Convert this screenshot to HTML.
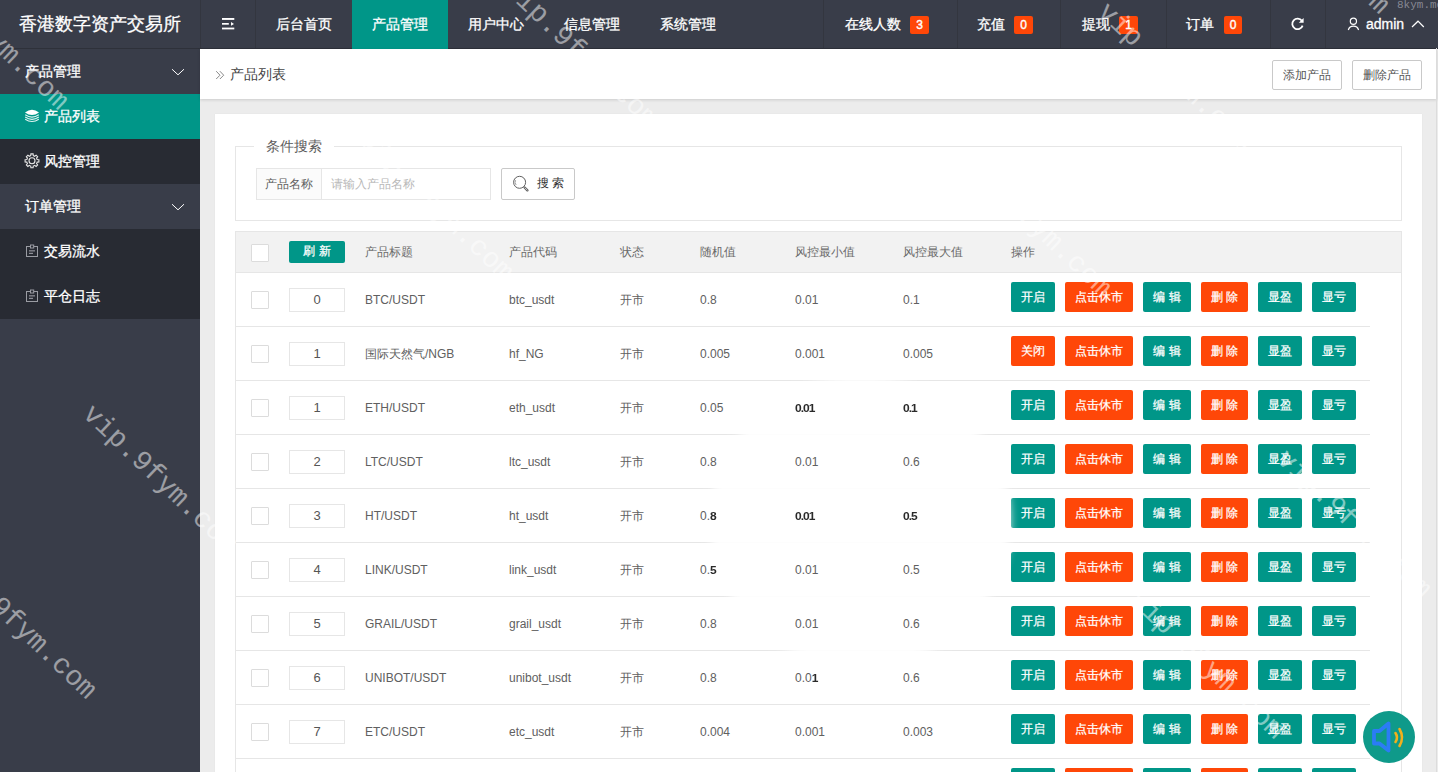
<!DOCTYPE html>
<html><head><meta charset="utf-8">
<style>
*{margin:0;padding:0;box-sizing:border-box}
html,body{width:1438px;height:772px;overflow:hidden;background:#ececec;font-family:"Liberation Sans",sans-serif;color:#666}
.abs{position:absolute}
#hdr{position:absolute;left:0;top:0;width:1438px;height:49px;background:#393d49;border-bottom:1px solid #2e313a}
#logo{position:absolute;left:19px;top:0;height:48px;line-height:48px;font-size:18px;color:#fff;white-space:nowrap}
.nav{position:absolute;top:0;height:48px;line-height:48px;font-size:14px;color:#fff;white-space:nowrap}
.sep{position:absolute;top:0;width:1px;height:48px;background:#33363f}
.badge{position:absolute;top:16px;height:18px;line-height:18px;font-size:12px;color:#fff;background:#ff4708;border-radius:2px;text-align:center;-webkit-text-stroke:0.4px #fff}
#side{position:absolute;left:0;top:49px;width:200px;height:723px;background:#393d49}
.srow{position:absolute;left:0;width:200px;height:45px;line-height:45px;font-size:14px;color:#fff;white-space:nowrap}
.srow span{position:absolute;top:0}
#crumb{position:absolute;left:200px;top:49px;width:1237px;height:50px;background:#fff;box-shadow:0 1px 3px rgba(0,0,0,.14)}
.obtn{position:absolute;top:11px;width:70px;height:30px;line-height:28px;border:1px solid #c9c9c9;border-radius:2px;font-size:12px;color:#555;text-align:center;background:#fff}
#card{position:absolute;left:215px;top:114px;width:1207px;height:700px;background:#fff;box-shadow:0 0 1px rgba(0,0,0,.08)}
#rstrip{position:absolute;left:1436px;top:48px;width:1px;height:724px;background:#dcdcdc}

#fs{position:absolute;left:235px;top:146px;width:1167px;height:75px;border:1px solid #e6e6e6}
#legend{position:absolute;left:254px;top:136px;width:80px;height:20px;background:#fff;font-size:14px;line-height:20px;color:#5c5c5c;text-align:center}
.lbl{position:absolute;left:256px;top:168px;width:66px;height:32px;border:1px solid #e6e6e6;background:#fbfbfb;font-size:12px;line-height:30px;color:#606060;text-align:center}
.inp{position:absolute;left:321px;top:168px;width:170px;height:32px;border:1px solid #e6e6e6;border-left:1px solid #e6e6e6;background:#fff;font-size:12px;line-height:30px;color:#b8b8b8;padding-left:9px}
.sbtn{position:absolute;left:501px;top:168px;width:74px;height:32px;border:1px solid #c9c9c9;border-radius:2px;background:#fff;font-size:12px;line-height:30px;color:#333}
#tbl{position:absolute;left:235px;top:231px;width:1167px;height:600px;border:1px solid #e6e6e6;background:#fff}
#thead{position:absolute;left:236px;top:232px;width:1165px;height:41px;background:#f2f2f2;border-bottom:1px solid #e6e6e6}
.th{position:absolute;top:232px;height:40px;line-height:40px;font-size:12px;color:#6a6a6a;white-space:nowrap}
.tr{position:absolute;left:0;width:1370px;height:54px}
.tr:after{content:"";position:absolute;left:236px;right:0;bottom:0;height:1px;background:#e6e6e6}
.cb{position:absolute;width:18px;height:18px;border:1px solid #dcdcdc;background:#fff;border-radius:1px}
.sort{position:absolute;width:56px;height:24px;border:1px solid #e6e6e6;font-size:13px;line-height:22px;text-align:center;color:#555;background:#fff}
.td{position:absolute;top:1px;height:53px;line-height:53px;font-size:12px;color:#606060;white-space:nowrap}
.btn{position:absolute;top:9px;height:30px;line-height:30px;font-size:12px;color:#fff;text-align:center;border-radius:2px;white-space:nowrap}
.btn.g{background:#009688}.btn.o{background:#ff4708}
.nav,.srow,#logo{-webkit-text-stroke:0.3px #fff}

.btn{-webkit-text-stroke:0.25px #fff}
.wm{position:absolute;z-index:20;font-family:"Liberation Mono",monospace;font-size:28px;line-height:28px;color:rgba(255,255,255,.5);white-space:nowrap;transform-origin:0 0;pointer-events:none}
#blur{position:absolute;z-index:1;left:710px;top:376px;width:300px;height:292px;border-radius:50%;background:#fff;filter:blur(5px);opacity:.95}
.td{z-index:2}
#spk{position:absolute;z-index:30;left:1363px;top:711px;width:52px;height:52px;border-radius:50%;background:#0f9a8a}
.gb{color:#2a2a2a;font-weight:bold;filter:blur(.6px);letter-spacing:-1px;display:inline-block;transform:scaleY(.9)}
</style></head><body>

<div id="hdr">
  
  <svg class="abs" style="left:0;top:0;z-index:3" width="1438" height="48">
    <g fill="#fff">
      <rect x="222" y="18" width="12.3" height="1.9"/>
      <rect x="222" y="23" width="6.8" height="1.7"/>
      <path d="M231 22 L234 23.9 L231 25.8 Z"/>
      <rect x="222" y="27.6" width="12.3" height="1.8"/>
    </g>
    <g fill="none" stroke="#fff">
      <path d="M1301.9 20.8 A5.3 5.3 0 1 0 1302.6 25.6" stroke-width="1.8"/>
      <circle cx="1353.4" cy="21.2" r="3.1" stroke-width="1.2"/>
      <path d="M1348.3 30 A5.4 5.4 0 0 1 1358.6 30" stroke-width="1.2"/>
      <path d="M1412 27 L1418 21.2 L1423.8 27" stroke-width="1.2"/>
    </g>
    <path d="M1303.6 18 L1303.6 22.8 L1298.8 22.8 Z" fill="#fff"/>
  </svg>
  <div id="logo">香港数字资产交易所</div>
  <div class="sep" style="left:200px"></div>
  <div class="sep" style="left:255px"></div>
  <div class="nav" style="left:352px;width:96px;height:49px;background:#009688"></div>
  <div class="nav" style="left:276px">后台首页</div>
  <div class="nav" style="left:372px">产品管理</div>
  <div class="nav" style="left:468px">用户中心</div>
  <div class="nav" style="left:564px">信息管理</div>
  <div class="nav" style="left:660px">系统管理</div>

  <div class="sep" style="left:823px"></div>
  <div class="sep" style="left:957px"></div>
  <div class="sep" style="left:1060px"></div>
  <div class="sep" style="left:1166px"></div>
  <div class="sep" style="left:1270px"></div>
  <div class="sep" style="left:1325px"></div>
  <div class="nav" style="left:845px">在线人数</div>
  <div class="badge" style="left:910px;width:19px">3</div>
  <div class="nav" style="left:977px">充值</div>
  <div class="badge" style="left:1014px;width:19px">0</div>
  <div class="nav" style="left:1082px">提现</div>
  <div class="badge" style="left:1119px;width:19px">1</div>
  <div class="nav" style="left:1186px">订单</div>
  <div class="badge" style="left:1224px;width:18px">0</div>
  <div class="nav" style="left:1366px">admin</div>
</div>

<div id="side">
  <svg class="abs" style="left:0;top:-1px;z-index:3" width="200" height="300">
    <g fill="none" stroke="#fff" stroke-width="1">
      <path d="M172 21.2 L178 26.8 L184 21.2"/>
      <path d="M172 156.2 L178 161.8 L184 156.2"/>
    </g>
    <g fill="#fff">
      <path d="M25 64.5 Q32 59 39 64.5 Q32 69.5 25 64.5 Z"/>
    </g>
    <g fill="none" stroke="#e0f5f2" stroke-width="1.1">
      <path d="M25.2 66.8 Q32 71.5 38.8 66.8"/>
      <path d="M25.2 69 Q32 73.7 38.8 69"/>
      <path d="M25.2 71.2 Q32 75.9 38.8 71.2"/>
    </g>
    <g fill="none" stroke="#e8e8e8" stroke-width="1.1" transform="translate(32 112.8)">
      <path d="M-1.99 -4.91 L-1.28 -5.14 L-1.10 -6.91 L1.10 -6.91 L1.28 -5.14 L1.99 -4.91 L2.07 -4.88 L2.73 -4.54 L4.11 -5.66 L5.66 -4.11 L4.54 -2.73 L4.88 -2.07 L4.91 -1.99 L5.14 -1.28 L6.91 -1.10 L6.91 1.10 L5.14 1.28 L4.91 1.99 L4.88 2.07 L4.54 2.73 L5.66 4.11 L4.11 5.66 L2.73 4.54 L2.07 4.88 L1.99 4.91 L1.28 5.14 L1.10 6.91 L-1.10 6.91 L-1.28 5.14 L-1.99 4.91 L-2.07 4.88 L-2.73 4.54 L-4.11 5.66 L-5.66 4.11 L-4.54 2.73 L-4.88 2.07 L-4.91 1.99 L-5.14 1.28 L-6.91 1.10 L-6.91 -1.10 L-5.14 -1.28 L-4.91 -1.99 L-4.88 -2.07 L-4.54 -2.73 L-5.66 -4.11 L-4.11 -5.66 L-2.73 -4.54 L-2.07 -4.88 Z"/>
      <circle cx="0" cy="0" r="3"/>
    </g>
    <g fill="none" stroke="#9a9ca3" stroke-width="1">
      <rect x="26.5" y="198.5" width="11" height="10"/>
      <rect x="30.5" y="197" width="3.2" height="3" fill="#282b33"/>
      <rect x="26.5" y="243.5" width="11" height="10"/>
      <rect x="30.5" y="242" width="3.2" height="3" fill="#282b33"/>
    </g>
    <g fill="#9a9ca3">
      <rect x="29" y="202.3" width="6" height="1.1"/>
      <rect x="29" y="204.8" width="4" height="1.1"/>
      <rect x="29" y="247.3" width="6" height="1.1"/>
      <rect x="29" y="249.8" width="4" height="1.1"/>
    </g>
  </svg>

  <div class="srow" style="top:0"><span style="left:25px">产品管理</span></div>
  <div class="srow" style="top:45px;background:#009688"><span style="left:44px">产品列表</span></div>
  <div class="srow" style="top:90px;background:#282b33"><span style="left:44px">风控管理</span></div>
  <div class="srow" style="top:135px"><span style="left:25px">订单管理</span></div>
  <div class="srow" style="top:180px;background:#282b33"><span style="left:44px">交易流水</span></div>
  <div class="srow" style="top:225px;background:#282b33"><span style="left:44px">平仓日志</span></div>
</div>

<div id="crumb">
  <svg class="abs" style="left:0;top:-1px;z-index:3" width="40" height="50">
    <g fill="none" stroke="#888" stroke-width="1">
      <path d="M16.2 23.2 L20 27.2 L16.2 31"/>
      <path d="M19.9 23.2 L23.7 27.2 L19.9 31"/>
    </g>
  </svg>

  <div class="abs" style="left:30px;top:0;line-height:50px;font-size:14px;color:#444">产品列表</div>
  <div class="obtn" style="left:1072px">添加产品</div>
  <div class="obtn" style="left:1152px">删除产品</div>
</div>
<div id="rstrip"></div>

<div id="card"></div>
<div id="fs"></div>
<div id="legend">条件搜索</div>
<div class="lbl">产品名称</div>
<div class="inp">请输入产品名称</div>
<div class="sbtn"><svg class="abs" style="left:-1px;top:-1px;z-index:3" width="74" height="32"><circle cx="18.6" cy="14.3" r="6" fill="none" stroke="#606060" stroke-width="1"/><path d="M14.6 12.2 A4 4 0 0 0 15.2 17" fill="none" stroke="#888" stroke-width="0.8"/><path d="M23.6 19.5 L26.4 22.3" stroke="#606060" stroke-width="2.4" stroke-linecap="round"/><path d="M23.9 19.8 L26.1 22" stroke="#fff" stroke-width="0.7" stroke-linecap="round"/></svg><span style="position:absolute;left:35px;top:-1px">搜 索</span></div>
<div id="tbl"></div>
<div id="thead"></div>
<div class="cb" style="left:251px;top:244px"></div>
<div class="btn g" style="left:289px;top:241px;width:56px;height:22px;line-height:21px;font-size:12px;letter-spacing:.5px">刷 新</div>
<div class="th" style="left:365px">产品标题</div>
<div class="th" style="left:509px">产品代码</div>
<div class="th" style="left:620px">状态</div>
<div class="th" style="left:700px">随机值</div>
<div class="th" style="left:795px">风控最小值</div>
<div class="th" style="left:903px">风控最大值</div>
<div class="th" style="left:1011px">操作</div>
<div class="tr" style="top:273px">
<div class="cb" style="left:251px;top:18px"></div>
<div class="sort" style="left:289px;top:15px">0</div>
<div class="td" style="left:365px">BTC/USDT</div>
<div class="td" style="left:509px">btc_usdt</div>
<div class="td" style="left:620px">开市</div>
<div class="td" style="left:700px">0.8</div>
<div class="td" style="left:795px">0.01</div>
<div class="td" style="left:903px">0.1</div>
<div class="btn g" style="left:1011px;width:44px">开启</div>
<div class="btn o" style="left:1065px;width:68px">点击休市</div>
<div class="btn g" style="left:1143px;width:48px">编 辑</div>
<div class="btn o" style="left:1201px;width:47px">删 除</div>
<div class="btn g" style="left:1258px;width:44px">显盈</div>
<div class="btn g" style="left:1312px;width:44px">显亏</div>
</div>
<div class="tr" style="top:327px">
<div class="cb" style="left:251px;top:18px"></div>
<div class="sort" style="left:289px;top:15px">1</div>
<div class="td" style="left:365px">国际天然气/NGB</div>
<div class="td" style="left:509px">hf_NG</div>
<div class="td" style="left:620px">开市</div>
<div class="td" style="left:700px">0.005</div>
<div class="td" style="left:795px">0.001</div>
<div class="td" style="left:903px">0.005</div>
<div class="btn o" style="left:1011px;width:44px">关闭</div>
<div class="btn o" style="left:1065px;width:68px">点击休市</div>
<div class="btn g" style="left:1143px;width:48px">编 辑</div>
<div class="btn o" style="left:1201px;width:47px">删 除</div>
<div class="btn g" style="left:1258px;width:44px">显盈</div>
<div class="btn g" style="left:1312px;width:44px">显亏</div>
</div>
<div class="tr" style="top:381px">
<div class="cb" style="left:251px;top:18px"></div>
<div class="sort" style="left:289px;top:15px">1</div>
<div class="td" style="left:365px">ETH/USDT</div>
<div class="td" style="left:509px">eth_usdt</div>
<div class="td" style="left:620px">开市</div>
<div class="td" style="left:700px">0.05</div>
<div class="td" style="left:795px"><span class="gb">0.01</span></div>
<div class="td" style="left:903px"><span class="gb">0.1</span></div>
<div class="btn g" style="left:1011px;width:44px">开启</div>
<div class="btn o" style="left:1065px;width:68px">点击休市</div>
<div class="btn g" style="left:1143px;width:48px">编 辑</div>
<div class="btn o" style="left:1201px;width:47px">删 除</div>
<div class="btn g" style="left:1258px;width:44px">显盈</div>
<div class="btn g" style="left:1312px;width:44px">显亏</div>
</div>
<div class="tr" style="top:435px">
<div class="cb" style="left:251px;top:18px"></div>
<div class="sort" style="left:289px;top:15px">2</div>
<div class="td" style="left:365px">LTC/USDT</div>
<div class="td" style="left:509px">ltc_usdt</div>
<div class="td" style="left:620px">开市</div>
<div class="td" style="left:700px">0.8</div>
<div class="td" style="left:795px">0.01</div>
<div class="td" style="left:903px">0.6</div>
<div class="btn g" style="left:1011px;width:44px">开启</div>
<div class="btn o" style="left:1065px;width:68px">点击休市</div>
<div class="btn g" style="left:1143px;width:48px">编 辑</div>
<div class="btn o" style="left:1201px;width:47px">删 除</div>
<div class="btn g" style="left:1258px;width:44px">显盈</div>
<div class="btn g" style="left:1312px;width:44px">显亏</div>
</div>
<div class="tr" style="top:489px">
<div class="cb" style="left:251px;top:18px"></div>
<div class="sort" style="left:289px;top:15px">3</div>
<div class="td" style="left:365px">HT/USDT</div>
<div class="td" style="left:509px">ht_usdt</div>
<div class="td" style="left:620px">开市</div>
<div class="td" style="left:700px">0.<span class="gb">8</span></div>
<div class="td" style="left:795px"><span class="gb">0.01</span></div>
<div class="td" style="left:903px"><span class="gb">0.5</span></div>
<div class="btn g" style="left:1011px;width:44px">开启</div>
<div class="btn o" style="left:1065px;width:68px">点击休市</div>
<div class="btn g" style="left:1143px;width:48px">编 辑</div>
<div class="btn o" style="left:1201px;width:47px">删 除</div>
<div class="btn g" style="left:1258px;width:44px">显盈</div>
<div class="btn g" style="left:1312px;width:44px">显亏</div>
</div>
<div class="tr" style="top:543px">
<div class="cb" style="left:251px;top:18px"></div>
<div class="sort" style="left:289px;top:15px">4</div>
<div class="td" style="left:365px">LINK/USDT</div>
<div class="td" style="left:509px">link_usdt</div>
<div class="td" style="left:620px">开市</div>
<div class="td" style="left:700px">0.<span class="gb">5</span></div>
<div class="td" style="left:795px">0.01</div>
<div class="td" style="left:903px">0.5</div>
<div class="btn g" style="left:1011px;width:44px">开启</div>
<div class="btn o" style="left:1065px;width:68px">点击休市</div>
<div class="btn g" style="left:1143px;width:48px">编 辑</div>
<div class="btn o" style="left:1201px;width:47px">删 除</div>
<div class="btn g" style="left:1258px;width:44px">显盈</div>
<div class="btn g" style="left:1312px;width:44px">显亏</div>
</div>
<div class="tr" style="top:597px">
<div class="cb" style="left:251px;top:18px"></div>
<div class="sort" style="left:289px;top:15px">5</div>
<div class="td" style="left:365px">GRAIL/USDT</div>
<div class="td" style="left:509px">grail_usdt</div>
<div class="td" style="left:620px">开市</div>
<div class="td" style="left:700px">0.8</div>
<div class="td" style="left:795px">0.01</div>
<div class="td" style="left:903px">0.6</div>
<div class="btn g" style="left:1011px;width:44px">开启</div>
<div class="btn o" style="left:1065px;width:68px">点击休市</div>
<div class="btn g" style="left:1143px;width:48px">编 辑</div>
<div class="btn o" style="left:1201px;width:47px">删 除</div>
<div class="btn g" style="left:1258px;width:44px">显盈</div>
<div class="btn g" style="left:1312px;width:44px">显亏</div>
</div>
<div class="tr" style="top:651px">
<div class="cb" style="left:251px;top:18px"></div>
<div class="sort" style="left:289px;top:15px">6</div>
<div class="td" style="left:365px">UNIBOT/USDT</div>
<div class="td" style="left:509px">unibot_usdt</div>
<div class="td" style="left:620px">开市</div>
<div class="td" style="left:700px">0.8</div>
<div class="td" style="left:795px">0.0<span class="gb">1</span></div>
<div class="td" style="left:903px">0.6</div>
<div class="btn g" style="left:1011px;width:44px">开启</div>
<div class="btn o" style="left:1065px;width:68px">点击休市</div>
<div class="btn g" style="left:1143px;width:48px">编 辑</div>
<div class="btn o" style="left:1201px;width:47px">删 除</div>
<div class="btn g" style="left:1258px;width:44px">显盈</div>
<div class="btn g" style="left:1312px;width:44px">显亏</div>
</div>
<div class="tr" style="top:705px">
<div class="cb" style="left:251px;top:18px"></div>
<div class="sort" style="left:289px;top:15px">7</div>
<div class="td" style="left:365px">ETC/USDT</div>
<div class="td" style="left:509px">etc_usdt</div>
<div class="td" style="left:620px">开市</div>
<div class="td" style="left:700px">0.004</div>
<div class="td" style="left:795px">0.001</div>
<div class="td" style="left:903px">0.003</div>
<div class="btn g" style="left:1011px;width:44px">开启</div>
<div class="btn o" style="left:1065px;width:68px">点击休市</div>
<div class="btn g" style="left:1143px;width:48px">编 辑</div>
<div class="btn o" style="left:1201px;width:47px">删 除</div>
<div class="btn g" style="left:1258px;width:44px">显盈</div>
<div class="btn g" style="left:1312px;width:44px">显亏</div>
</div>
<div class="tr" style="top:759px">
<div class="cb" style="left:251px;top:18px"></div>
<div class="sort" style="left:289px;top:15px">8</div>
<div class="td" style="left:365px">XRP/USDT</div>
<div class="td" style="left:509px">xrp_usdt</div>
<div class="td" style="left:620px">开市</div>
<div class="td" style="left:700px">0.8</div>
<div class="td" style="left:795px">0.01</div>
<div class="td" style="left:903px">0.6</div>
<div class="btn g" style="left:1011px;width:44px">开启</div>
<div class="btn o" style="left:1065px;width:68px">点击休市</div>
<div class="btn g" style="left:1143px;width:48px">编 辑</div>
<div class="btn o" style="left:1201px;width:47px">删 除</div>
<div class="btn g" style="left:1258px;width:44px">显盈</div>
<div class="btn g" style="left:1312px;width:44px">显亏</div>
</div>


<div id="blur"></div>
<div id="spk"><svg width="52" height="52" style="position:absolute;left:0;top:0">
<path d="M11 20 L16.5 20 L25.5 12.5 L25.5 39.5 L16.5 32.5 L11 32.5 Z" fill="none" stroke="#2b7cf5" stroke-width="3.8" stroke-linejoin="round" style="filter:blur(.4px)"/>
<path d="M32.5 22 Q35.5 26.5 32.5 31" fill="none" stroke="#f2b01c" stroke-width="2.6" stroke-linecap="round"/>
<path d="M36.5 18 Q41.5 26.5 36.5 35" fill="none" stroke="#f2b01c" stroke-width="2.6" stroke-linecap="round"/>
</svg></div>
<div class="wm" style="left:96px;top:400px;transform:rotate(43.5deg)">vip.9fym.com</div>
<div class="wm" style="left:-45px;top:546px;transform:rotate(43.5deg)">vip.9fym.com</div>
<div class="wm" style="left:-73px;top:-43px;transform:rotate(43.5deg)">vip.9fym.com</div>
<div class="wm" style="left:517px;top:-25px;transform:rotate(43.5deg)">vip.9fym.com</div>
<div class="wm" style="left:1111px;top:-2px;transform:rotate(43.5deg)">vip.9fym.com</div>
<div class="wm" style="left:1248px;top:-139px;transform:rotate(43.5deg)">vip.9fym.com</div>
<div class="abs" style="z-index:20;left:1397px;top:-1px;font-family:'Liberation Mono',monospace;font-size:11px;color:rgba(200,200,210,.55)">8kym.me</div>
<div class="wm" style="left:970px;top:144px;transform:rotate(43.5deg)">vip.9fym.com</div>
<div class="wm" style="left:1290px;top:445px;transform:rotate(43.5deg)">vip.9fym.com</div>
<div class="wm" style="left:1143px;top:586px;transform:rotate(43.5deg)">vip.9fym.com</div>
<div class="wm" style="left:372px;top:128px;transform:rotate(43.5deg)">vip.9fym.com</div>
</body></html>
